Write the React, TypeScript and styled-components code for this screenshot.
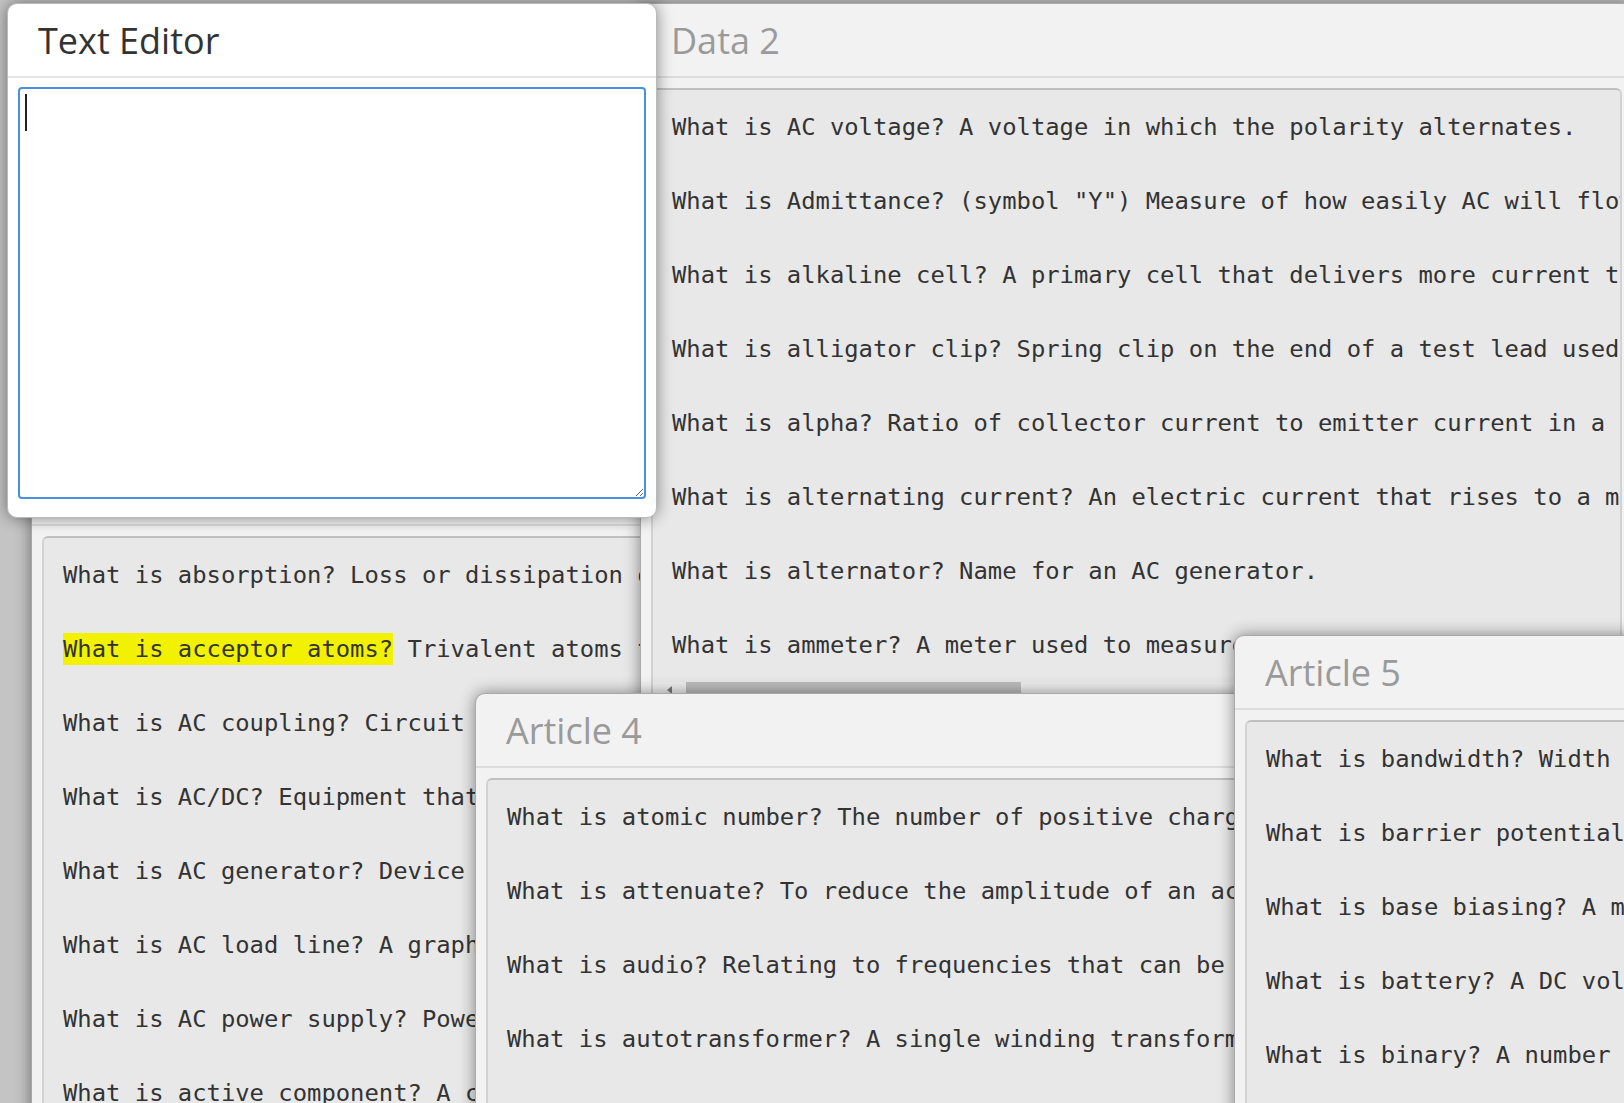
import React from 'react'
import styled, { createGlobalStyle } from 'styled-components'

type Entry = { q: string; a: string; hit?: boolean }

type WindowData = {
  title: string
  x: number
  y: number
  w: number
  h: number
  z: number
  scroll?: { offset: number; thumb: number }
  rows: Entry[]
}

const windows: WindowData[] = [
  {
    title: 'Data 1',
    x: 31, y: 451, w: 640, h: 700, z: 1,
    rows: [
      { q: 'What is absorption?', a: 'Loss or dissipation of energy as it travels through a medium.' },
      { q: 'What is acceptor atoms?', a: 'Trivalent atoms that accept electrons when used as impurities.', hit: true },
      { q: 'What is AC coupling?', a: 'Circuit that passes an AC signal while blocking a DC voltage.' },
      { q: 'What is AC/DC?', a: 'Equipment that will operate on either an AC or a DC power source.' },
      { q: 'What is AC generator?', a: 'Device that converts mechanical energy into AC electrical energy.' },
      { q: 'What is AC load line?', a: 'A graph of all possible operating points of a transistor for AC signals.' },
      { q: 'What is AC power supply?', a: 'Power supply that delivers an alternating voltage and current.' },
      { q: 'What is active component?', a: 'A component that can control current, such as a transistor.' },
    ],
  },
  {
    title: 'Data 2',
    x: 640, y: 3, w: 993, h: 707, z: 2,
    scroll: { offset: 0, thumb: 335 },
    rows: [
      { q: 'What is AC voltage?', a: 'A voltage in which the polarity alternates.' },
      { q: 'What is Admittance?', a: '(symbol "Y") Measure of how easily AC will flow through a circuit.' },
      { q: 'What is alkaline cell?', a: 'A primary cell that delivers more current than the carbon-zinc cell.' },
      { q: 'What is alligator clip?', a: 'Spring clip on the end of a test lead used to make temporary connections.' },
      { q: 'What is alpha?', a: 'Ratio of collector current to emitter current in a bipolar junction transistor.' },
      { q: 'What is alternating current?', a: 'An electric current that rises to a maximum in one direction, falls back to zero, and then rises to a maximum in the opposite direction, then repeats.' },
      { q: 'What is alternator?', a: 'Name for an AC generator.' },
      { q: 'What is ammeter?', a: 'A meter used to measure current.' },
    ],
  },
  {
    title: 'Article 4',
    x: 475, y: 693, w: 800, h: 520, z: 3,
    rows: [
      { q: 'What is atomic number?', a: 'The number of positive charges or protons in the nucleus of an atom.' },
      { q: 'What is attenuate?', a: 'To reduce the amplitude of an action or signal.' },
      { q: 'What is audio?', a: 'Relating to frequencies that can be heard by the human ear.' },
      { q: 'What is autotransformer?', a: 'A single winding transformer in which the input and output share turns.' },
      { q: 'What is average value?', a: 'The mean value of a waveform over one half cycle.' },
    ],
  },
  {
    title: 'Article 5',
    x: 1234, y: 635, w: 560, h: 560, z: 4,
    rows: [
      { q: 'What is bandwidth?', a: 'Width of the band of frequencies passed by a circuit.' },
      { q: 'What is barrier potential?', a: 'Voltage across the depletion region of a PN junction.' },
      { q: 'What is base biasing?', a: 'A method of biasing a transistor through its base resistor.' },
      { q: 'What is battery?', a: 'A DC voltage source of two or more cells.' },
      { q: 'What is binary?', a: 'A number system with only two digits, 0 and 1.' },
      { q: 'What is bipolar?', a: 'Having two polarities, positive and negative.' },
    ],
  },
]

function App() {
  return (
    <>
      <GlobalStyle />
      <Desktop>
        {windows.map((win) => (
          <Win key={win.title} $x={win.x} $y={win.y} $w={win.w} $h={win.h} $z={win.z}>
            <TitleBar>{win.title}</TitleBar>
            <Body>
              <Panel>
                <Sheet>
                  {win.rows.map((row, i) => (
                    <Line key={i}>
                      {row.hit ? <Hit>{row.q}</Hit> : row.q} {row.a}
                    </Line>
                  ))}
                </Sheet>
                {win.scroll && (
                  <HBar>
                    <ArrowButton>
                      <svg width="7" height="8" viewBox="0 0 7 8">
                        <polygon points="6,0 6,8 1,4" fill="#7a7a7a" />
                      </svg>
                    </ArrowButton>
                    <Thumb style={{ marginLeft: win.scroll.offset, width: win.scroll.thumb }} />
                  </HBar>
                )}
              </Panel>
            </Body>
          </Win>
        ))}

        <Win $x={7} $y={3} $w={650} $h={515} $z={5} $active>
          <TitleBar $active>Text Editor</TitleBar>
          <EditorBody>
            <Editor autoFocus spellCheck={false} />
          </EditorBody>
        </Win>
      </Desktop>
    </>
  )
}

const GlobalStyle = createGlobalStyle`
  * {
    box-sizing: border-box;
  }
  html, body {
    margin: 0;
    padding: 0;
  }
  body {
    background: #c4c4c4;
    font-family: "Open Sans", "Liberation Sans", sans-serif;
    overflow: hidden;
  }
`

const Desktop = styled.div`
  position: relative;
  width: 1624px;
  height: 1103px;
  overflow: hidden;
  background: #c4c4c4;
`

const Win = styled.section<{ $x: number; $y: number; $w: number; $h: number; $z: number; $active?: boolean }>`
  position: absolute;
  left: ${(p) => p.$x}px;
  top: ${(p) => p.$y}px;
  width: ${(p) => p.$w}px;
  height: ${(p) => p.$h}px;
  z-index: ${(p) => p.$z};
  display: flex;
  flex-direction: column;
  background: ${(p) => (p.$active ? '#ffffff' : '#f2f2f2')};
  border: 1px solid ${(p) => (p.$active ? '#b9b9b9' : '#a9a9a9')};
  border-radius: 10px;
  box-shadow: 0 0 16px rgba(0, 0, 0, 0.45);
  overflow: hidden;
`

const TitleBar = styled.header<{ $active?: boolean }>`
  flex: 0 0 auto;
  height: 74px;
  display: flex;
  align-items: center;
  padding-left: 30px;
  border-bottom: 2px solid ${(p) => (p.$active ? '#e6e6e6' : '#dcdcdc')};
  font-family: "Open Sans", sans-serif;
  font-size: 36px;
  font-weight: 400;
  color: ${(p) => (p.$active ? '#333333' : '#9a9a9a')};
  white-space: nowrap;
`

const Body = styled.div`
  flex: 1;
  min-height: 0;
  display: flex;
  flex-direction: column;
  padding: 10px;
`

const EditorBody = styled(Body)`
  padding: 9px 10px 18px;
`

const Panel = styled.div`
  flex: 1;
  min-height: 0;
  display: flex;
  flex-direction: column;
  background: #e8e8e8;
  border: 2px solid #d2d2d2;
  border-top-color: #c0c0c0;
  border-radius: 6px;
  overflow: hidden;
`

const Sheet = styled.div`
  flex: 1;
  min-height: 0;
  padding: 19px 18px 0 19px;
  overflow: hidden;
  font-family: "DejaVu Sans Mono", "Liberation Mono", monospace;
  font-size: 23.85px;
  color: #333333;
`

const Line = styled.p`
  margin: 0 0 38px;
  line-height: 36px;
  white-space: pre;
`

const Hit = styled.mark`
  background: #f2f200;
  color: inherit;
  padding: 2px 0;
`

const HBar = styled.div`
  flex: 0 0 15px;
  display: flex;
  align-items: stretch;
  background: #efefef;
`

const ArrowButton = styled.div`
  flex: 0 0 33px;
  display: flex;
  align-items: center;
  justify-content: center;
`

const Thumb = styled.div`
  background: #bdbdbd;
`

const Editor = styled.textarea`
  display: block;
  flex: 1;
  width: 100%;
  margin: 0;
  padding: 5px;
  border: 2px solid #4a90e2;
  border-radius: 4px;
  outline: none;
  background: #ffffff linear-gradient(#222222, #222222) no-repeat 5px 5px / 2px 37px;
  font-family: "Open Sans", sans-serif;
  font-size: 27px;
  color: #222222;
  caret-color: #111111;
`

export default App
